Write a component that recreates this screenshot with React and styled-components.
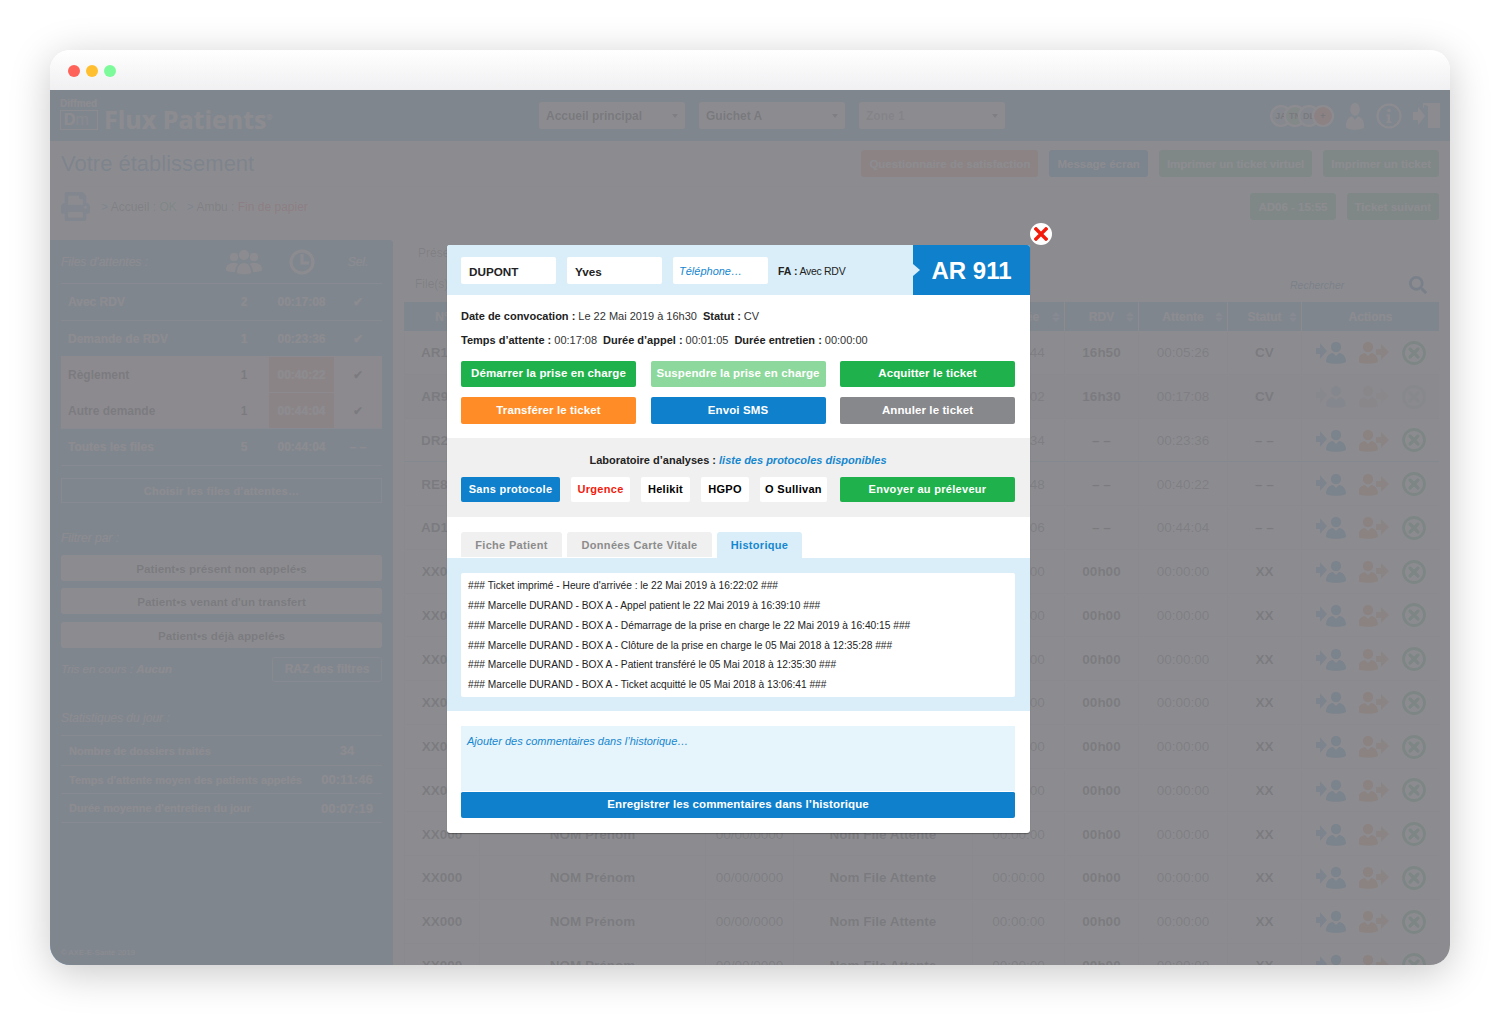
import React from 'react';
import styled, { createGlobalStyle } from 'styled-components';
import { FaPrint, FaSearch, FaSort } from 'react-icons/fa';

const GlobalStyle = createGlobalStyle`
  html, body {
    margin: 0;
    background: #fff;
    font-family: "Liberation Sans", Arial, sans-serif;
  }
  * { box-sizing: border-box; }
`;

const Page = styled.div`
  width: 1500px;
  height: 1015px;
  padding: 50px;
  overflow: hidden;
`;

const Frame = styled.div`
  height: 915px;
  border-radius: 20px;
  overflow: hidden;
  box-shadow: 0 8px 40px rgba(0, 0, 0, 0.22);
`;

const TitleBar = styled.div`
  height: 40px;
  display: flex;
  align-items: center;
  gap: 6px;
  padding: 2px 0 0 18px;
  background: linear-gradient(#fff, #f0f0f2);
`;

const Dot = styled.span`
  width: 12px;
  height: 12px;
  border-radius: 50%;
  background: ${p => p.$color};
`;

const Screen = styled.div`
  position: relative;
  height: 875px;
  overflow: hidden;
  background: #fff;
`;

const Overlay = styled.div`
  position: absolute;
  inset: 0;
  background: rgba(127, 128, 132, 0.9);
`;

/* --- application behind the dialog --- */

const AppHeader = styled.header`
  height: 51px;
  display: flex;
  align-items: center;
  padding: 0 10px;
  background: #86bdea;
  color: #fff;
`;

const Logo = styled.div`
  width: 44px;
  height: 36px;
  display: flex;
  flex-direction: column;
  font-weight: 700;
`;

const LogoName = styled.span`
  font-size: 10px;
  line-height: 11px;
  margin-bottom: 1px;
`;

const LogoBox = styled.span`
  width: 38px;
  height: 20px;
  padding-left: 3px;
  border: 1px solid #fff;
  font-size: 16px;
  line-height: 18px;
  u {
    text-decoration: none;
    font-weight: 400;
    opacity: 0.6;
  }
`;

const Product = styled.div`
  width: 435px;
  padding-top: 7px;
  font-family: "Open Sans", sans-serif;
  font-size: 25px;
  font-weight: 700;
  sup { font-size: 7px; }
`;

const Select = styled.div`
  width: 146px;
  height: 27px;
  margin-right: 14px;
  padding: 0 7px;
  display: flex;
  align-items: center;
  justify-content: space-between;
  border-radius: 3px;
  background: #fff;
  color: ${p => (p.$muted ? '#aaa' : '#444')};
  font-size: 12px;
  font-weight: 700;
  &::after {
    content: '';
    border: 3px solid transparent;
    border-top: 4px solid #777;
    margin-top: 3px;
  }
`;

const HeaderTools = styled.div`
  margin-left: auto;
  display: flex;
  align-items: center;
  gap: 11px;
`;

const Avatars = styled.div`
  display: flex;
`;

const Avatar = styled.span`
  width: 22px;
  height: 22px;
  margin-left: ${p => (p.$first ? '0' : '-8px')};
  border: 2px solid #fff;
  border-radius: 50%;
  display: flex;
  align-items: center;
  justify-content: center;
  background: ${p => p.$color};
  color: #444;
  font-size: 9px;
  font-weight: 700;
`;

const TitleRow = styled.div`
  height: 46px;
  margin: 0 11px;
  display: flex;
  align-items: center;
  justify-content: space-between;
  border-bottom: 1px solid #eee;
`;

const Heading = styled.h1`
  margin: 0;
  font-size: 22px;
  font-weight: 400;
  color: #70a8d8;
`;

const Actions = styled.div`
  display: flex;
  gap: 11px;
`;

const TopButton = styled.div`
  height: 27px;
  display: flex;
  align-items: center;
  padding: 0 8px;
  border-radius: 3px;
  background: ${p => p.$color};
  color: #fff;
  font-size: 11.5px;
  font-weight: 700;
`;

const StatusRow = styled.div`
  height: 53px;
  padding: 2px 11px 16px;
  display: flex;
  align-items: center;
  justify-content: space-between;
`;

const PrinterState = styled.div`
  display: flex;
  align-items: center;
  gap: 11px;
  font-size: 12px;
  color: #888;
  svg { color: #8cc4ee; }
  b { font-weight: 400; color: #7fc89a; }
  i { font-style: normal; color: #ff7070; }
  em { font-style: normal; color: #6cb4e8; }
`;

const Columns = styled.div`
  display: flex;
  height: 725px;
`;

const Sidebar = styled.aside`
  width: 343px;
  padding: 0 11px 8px;
  display: flex;
  flex-direction: column;
  border-radius: 0 3px 0 0;
  background: #86bdea;
  color: #fff;
`;

const QueueHead = styled.div`
  height: 43px;
  display: grid;
  grid-template-columns: 158px 50px 65px 48px;
  align-items: center;
  justify-items: center;
  font-size: 12px;
  font-style: italic;
  > :first-child { justify-self: start; }
`;

const QueueRow = styled.div`
  height: ${p => (p.$short ? '36px' : '37px')};
  padding-top: ${p => (p.$alert ? '1px' : '0')};
  display: grid;
  grid-template-columns: 158px 50px 65px 48px;
  align-items: center;
  justify-items: center;
  border-top: ${p => (p.$alert ? '0' : '1px solid #c9e5fb')};
  background: ${p => (p.$alert ? '#ffe8ee' : 'transparent')};
  color: ${p => (p.$alert ? '#555' : '#fff')};
  font-size: 12px;
  font-weight: 700;
`;

const QueueName = styled.span`
  justify-self: start;
  padding-left: 7px;
`;

const QueueTime = styled.span`
  align-self: stretch;
  justify-self: stretch;
  display: flex;
  align-items: center;
  justify-content: center;
  background: ${p => (p.$alert ? '#f4b0a2' : 'transparent')};
  color: #fff;
`;

const ChooseBox = styled.div`
  height: 25px;
  margin-top: 12px;
  border: 1px solid #c9e5fb;
  display: flex;
  align-items: center;
  justify-content: center;
  font-size: 11px;
  font-weight: 700;
  letter-spacing: 0.3px;
`;

const QueueEnd = styled.div`
  border-top: 1px solid #c9e5fb;
`;

const SideLabel = styled.div`
  margin: ${p => p.$margin};
  font-size: 12px;
  line-height: 14px;
  font-style: italic;
`;

const FilterButton = styled.div`
  height: 26px;
  margin-bottom: ${p => p.$gap || '7px'};
  display: flex;
  align-items: center;
  justify-content: center;
  border-radius: 3px;
  background: #fff;
  color: #555;
  font-size: 11.7px;
  font-weight: 700;
`;

const SortRow = styled.div`
  height: 26px;
  margin-top: 8px;
  display: flex;
  align-items: center;
  justify-content: space-between;
  font-size: 11.5px;
  font-style: italic;
`;

const ResetBox = styled.div`
  width: 110px;
  height: 25px;
  border: 1px solid #c9e5fb;
  border-radius: 3px;
  display: flex;
  align-items: center;
  justify-content: center;
  font-size: 12px;
  font-style: normal;
  font-weight: 700;
`;

const StatRow = styled.div`
  height: ${p => p.$h || 29}px;
  padding: 0 8px;
  display: flex;
  align-items: center;
  justify-content: space-between;
  border-top: 1px solid #c9e5fb;
  font-size: 11px;
  font-weight: 700;
  white-space: nowrap;
`;

const StatValue = styled.span`
  width: 54px;
  text-align: center;
  font-size: 13px;
  color: #fff;
`;

const StatEnd = styled.div`
  border-top: 1px solid #c9e5fb;
`;

const Copyright = styled.div`
  margin-top: auto;
  font-size: 7.5px;
  letter-spacing: 0.2px;
`;

const Main = styled.main`
  flex: 1;
  padding: 0 11px;
  overflow: hidden;
`;

const MainTop = styled.div`
  height: 62px;
  position: relative;
  display: flex;
  justify-content: space-between;
  padding: 6px 14px 0;
  color: #888;
  font-size: 12px;
`;

const FileLabel = styled.span`
  position: absolute;
  left: 11px;
  top: 37px;
`;

const Search = styled.div`
  width: 145px;
  height: 20px;
  margin: 29px -7px 0 0;
  padding: 0 5px 0 3px;
  display: flex;
  align-items: center;
  justify-content: space-between;
  background: #fafafa;
  color: #4a88bc;
  font-size: 10.5px;
  font-style: italic;
`;

const TableHead = styled.div`
  height: 29px;
  display: grid;
  grid-template-columns: 75px 226px 88px 179px 92px 74px 89px 74px 138px;
  background: #86bdea;
  color: #fff;
  font-size: 12px;
  font-weight: 700;
`;

const HeadCell = styled.div`
  position: relative;
  display: flex;
  align-items: center;
  justify-content: center;
  border-left: 1px solid #fff;
  &:first-child { border-left-color: #86bdea; }
  svg {
    position: absolute;
    right: 4px;
    width: 8px;
    color: #cde6fb;
  }
`;

const TableRow = styled.div`
  height: 43.75px;
  padding-top: 1px;
  display: grid;
  grid-template-columns: 75px 226px 88px 179px 92px 74px 89px 74px 138px;
  border-bottom: 1px solid ${p => (p.$mark ? '#a8d6f5' : '#e4e4e4')};
  background: ${p => (p.$dim ? '#ebe6ee' : 'transparent')};
  font-size: 13.5px;
`;

const Cell = styled.div`
  display: flex;
  align-items: center;
  justify-content: center;
  border-left: 1px solid #e4e4e4;
  font-weight: ${p => (p.$bold ? 700 : 400)};
  color: ${p => (p.$bold ? '#555' : '#777')};
`;

const ActionCell = styled(Cell)`
  gap: 13px;
  opacity: ${p => (p.$faded ? 0.25 : 0.8)};
`;

/* --- dialog --- */

const Modal = styled.section`
  position: absolute;
  left: 397px;
  top: 155px;
  width: 583px;
  height: 588px;
  border-radius: 3px;
  background: #fff;
  box-shadow: 0 1px 1px rgba(0, 0, 0, 0.35);
  color: #222;
`;

const CloseBadge = styled.div`
  position: absolute;
  right: -22px;
  top: -22px;
  width: 22px;
  height: 22px;
  border-radius: 50%;
  background: #fff;
  display: flex;
  align-items: center;
  justify-content: center;
`;

const ModalHead = styled.div`
  height: 50px;
  padding-left: 14px;
  display: flex;
  align-items: center;
  gap: 11px;
  border-radius: 3px 3px 0 0;
  background: #d9eef8;
`;

const Field = styled.div`
  width: 95px;
  height: 27px;
  padding: ${p => (p.$italic ? '2px 0 0 6px' : '2px 0 0 8px')};
  display: flex;
  align-items: center;
  border-radius: 2px;
  background: #fff;
  font-size: ${p => (p.$italic ? '11px' : '11.7px')};
  font-weight: ${p => (p.$italic ? 400 : 700)};
  font-style: ${p => (p.$italic ? 'italic' : 'normal')};
  color: ${p => (p.$italic ? '#1587cf' : '#222')};
`;

const QueueInfo = styled.div`
  margin-left: -1px;
  padding-top: 2px;
  font-size: 10.5px;
  letter-spacing: -0.3px;
  b { letter-spacing: 0; }
`;

const Tag = styled.div`
  position: relative;
  width: 117px;
  height: 50px;
  margin-left: auto;
  padding-top: 2px;
  display: flex;
  align-items: center;
  justify-content: center;
  border-radius: 0 3px 0 0;
  background: #0f80cb;
  color: #fff;
  font-size: 24px;
  font-weight: 700;
  &::before {
    content: '';
    position: absolute;
    left: 0;
    top: 19px;
    border: 6px solid transparent;
    border-left: 7px solid #d9eef8;
  }
`;

const Info = styled.div`
  padding: 9px 14px 0;
  font-size: 11px;
  line-height: 24px;
  color: #333;
  white-space: nowrap;
  b { margin-right: 3px; color: #222; }
  span { margin-right: 6px; }
`;

const ButtonGrid = styled.div`
  margin: 9px 15px 14px 14px;
  display: grid;
  grid-template-columns: repeat(3, 175px);
  grid-template-rows: 26px 27px;
  gap: 10px 14.5px;
`;

const DialogButton = styled.div`
  display: flex;
  align-items: center;
  justify-content: center;
  padding-bottom: 2px;
  border-radius: 2px;
  background: ${p => p.$color};
  color: #fff;
  font-size: 11.5px;
  font-weight: 700;
  letter-spacing: 0.1px;
`;

const Lab = styled.div`
  padding: 14px 15px 15px 14px;
  background: #f0f0f0;
`;

const LabTitle = styled.div`
  margin-bottom: 9px;
  text-align: center;
  font-size: 11px;
  line-height: 16px;
  font-weight: 700;
  em { color: #1587cf; }
`;

const LabRow = styled.div`
  height: 25px;
  display: grid;
  grid-template-columns: 99px 59px 49px 48px 67px 1fr;
  gap: 11px;
`;

const Protocol = styled.div`
  display: flex;
  align-items: center;
  justify-content: center;
  padding-bottom: 1px;
  margin-left: ${p => (p.$push ? '2px' : '0')};
  border-radius: 2px;
  background: ${p => p.$color || '#fff'};
  color: ${p => p.$text || '#000'};
  font-size: 11px;
  font-weight: 700;
  letter-spacing: 0.3px;
`;

const Tabs = styled.div`
  height: 41px;
  padding: 15px 14px 0;
  display: flex;
  gap: 5px;
`;

const Tab = styled.div`
  width: ${p => p.$width}px;
  height: ${p => (p.$active ? '26px' : '25px')};
  display: flex;
  align-items: center;
  justify-content: center;
  border-radius: 3px 3px 0 0;
  background: ${p => (p.$active ? '#d9eef8' : '#f0f0f0')};
  color: ${p => (p.$active ? '#1587cf' : '#8c8c8c')};
  font-size: 11px;
  font-weight: 700;
  letter-spacing: 0.3px;
`;

const HistoryPanel = styled.div`
  height: 153px;
  padding: 15px 15px 14px 14px;
  background: #d9eef8;
`;

const HistoryBox = styled.div`
  height: 124px;
  padding: 3px 7px 0;
  border-radius: 2px;
  background: #fff;
`;

const HistoryLine = styled.div`
  height: 19.85px;
  line-height: 20px;
  font-size: 10.2px;
  color: #222;
  white-space: nowrap;
`;

const CommentBox = styled.div`
  height: 65px;
  margin: 15px 15px 0 14px;
  padding: 8px 6px;
  background: #e6f4fc;
  color: #1587cf;
  font-size: 11px;
  line-height: 14px;
  font-style: italic;
`;

const SaveButton = styled(DialogButton)`
  margin: 0 15px 0 14px;
  height: 27px;
  border-top: 1px solid #fff;
`;

/* --- drawings --- */

const PersonShape = ({ x = 0, fill }) => (
  <g transform={`translate(${x} 0)`} fill={fill}>
    <circle cx="11" cy="6" r="5.2" />
    <path d="M1 21c0-6 3-8.500 7-9l3 3 3-3c4 .500 7 3 7 9-3 1.500-6 1.800-10 1.800S4 22.500 1 21z" />
  </g>
);

const Transfer = ({ color, reverse }) => (
  <svg width="30" height="23" viewBox="0 0 30 23">
    {reverse ? (
      <>
        <PersonShape x={-2} fill={color} />
        <path d="M17 8h5V3l8 8-8 8v-5h-5z" fill={color} opacity="0.85" />
      </>
    ) : (
      <>
        <path d="M0 7h4V2l7 8-7 8v-5H0z" fill={color} opacity="0.85" />
        <PersonShape x={9} fill={color} />
      </>
    )}
  </svg>
);

const CancelIcon = ({ size = 24 }) => (
  <svg width={size} height={size} viewBox="0 0 24 24">
    <circle cx="12" cy="12" r="10.500" fill="none" stroke="#46ad6e" strokeWidth="2.800" />
    <path d="M8 8l8 8M16 8l-8 8" stroke="#46ad6e" strokeWidth="3.400" strokeLinecap="round" />
  </svg>
);

const RowActions = ({ faded }) => (
  <ActionCell $faded={faded}>
    <Transfer color="#2a8acb" />
    <Transfer color="#ee8250" reverse />
    <CancelIcon />
  </ActionCell>
);

const UsersIcon = () => (
  <svg width="36" height="26" viewBox="0 0 36 26" fill="#fff">
    <circle cx="8" cy="8" r="4" />
    <circle cx="28" cy="8" r="4" />
    <circle cx="18" cy="6" r="5" />
    <path d="M0 21c0-5 3-7 8-7 2 0 3 .500 4 1-2 2-3 5-3 8-5 0-9-1-9-2zM36 21c0-5-3-7-8-7-2 0-3 .500-4 1 2 2 3 5 3 8 5 0 9-1 9-2zM11 24c0-6 3-10 7-10s7 4 7 10c-2 1.500-12 1.500-14 0z" />
  </svg>
);

const ClockIcon = () => (
  <svg width="26" height="26" viewBox="0 0 26 26" fill="none" stroke="#fff" strokeWidth="3">
    <circle cx="13" cy="13" r="11" />
    <path d="M13 5v9h7" />
  </svg>
);

const InfoIcon = () => (
  <svg width="26" height="26" viewBox="0 0 26 26" fill="none" stroke="#fff">
    <circle cx="13" cy="13" r="11.500" strokeWidth="2" />
    <circle cx="13" cy="7.500" r="1.800" fill="#fff" stroke="none" />
    <path d="M10.500 11.500h3.500v7h1.500v1.500h-5v-1.500h1.200v-5.500h-1.200z" fill="#fff" stroke="none" />
  </svg>
);

const ExitIcon = () => (
  <svg width="27" height="26" viewBox="0 0 27 26" fill="#fff">
    <path d="M0 9h5V4l7 9-7 9v-5H0z" />
    <path d="M11 0h16v25H15V3l-4-1v3h-1V0z" />
  </svg>
);

const CloseIcon = () => (
  <svg width="14" height="14" viewBox="0 0 14 14">
    <path d="M2 2l10 10M12 2L2 12" stroke="#f21b0c" strokeWidth="3.400" strokeLinecap="square" />
  </svg>
);

const PersonIcon = () => (
  <svg width="20" height="28" viewBox="0 0 22 23" preserveAspectRatio="none">
    <PersonShape fill="#fff" />
  </svg>
);

const headers = [
  ['N°', true], ['Nom Prénom', true], ['Date', true], ["File d'attente", true],
  ['Arrivée', true], ['RDV', true], ['Attente', true], ['Statut', true], ['Actions', false],
];

const rows = [
  { id: 'AR107', name: 'MARTIN Paul', date: '22/05/2019', file: 'Avec RDV', time: '16:34:44', rdv: '16h50', wait: '00:05:26', status: 'CV' },
  { id: 'AR911', name: 'DUPONT Yves', date: '22/05/2019', file: 'Avec RDV', time: '16:22:02', rdv: '16h30', wait: '00:17:08', status: 'CV', faded: true },
  { id: 'DR296', name: 'BERNARD Luc', date: '22/05/2019', file: 'Demande de RDV', time: '16:15:34', rdv: '– –', wait: '00:23:36', status: '– –', mark: true },
  { id: 'RE812', name: 'PETIT Anne', date: '22/05/2019', file: 'Règlement', time: '15:58:48', rdv: '– –', wait: '00:40:22', status: '– –' },
  { id: 'AD106', name: 'ROUX Marie', date: '22/05/2019', file: 'Autre demande', time: '15:55:06', rdv: '– –', wait: '00:44:04', status: '– –' },
  ...Array.from({ length: 10 }, () => ({
    id: 'XX000', name: 'NOM Prénom', date: '00/00/0000', file: 'Nom File Attente', time: '00:00:00', rdv: '00h00', wait: '00:00:00', status: 'XX',
  })),
];

const history = [
  "### Ticket imprimé - Heure d'arrivée : le 22 Mai 2019 à 16:22:02 ###",
  '### Marcelle DURAND - BOX A - Appel patient le 22 Mai 2019 à 16:39:10 ###',
  '### Marcelle DURAND - BOX A - Démarrage de la prise en charge le 22 Mai 2019 à 16:40:15 ###',
  '### Marcelle DURAND - BOX A - Clôture de la prise en charge le 05 Mai 2018 à 12:35:28 ###',
  '### Marcelle DURAND - BOX A - Patient transféré le 05 Mai 2018 à 12:35:30 ###',
  '### Marcelle DURAND - BOX A - Ticket acquitté le 05 Mai 2018 à 13:06:41 ###',
];

const App = () => (
  <Page>
    <GlobalStyle />
    <Frame>
      <TitleBar>
        <Dot $color="#ff6259" />
        <Dot $color="#ffbf2f" />
        <Dot $color="#7dfb9a" />
      </TitleBar>
      <Screen>
        <AppHeader>
          <Logo>
            <LogoName>Diffmed</LogoName>
            <LogoBox>D<u>m</u></LogoBox>
          </Logo>
          <Product>Flux Patients<sup>®</sup></Product>
          <Select>Accueil principal</Select>
          <Select>Guichet A</Select>
          <Select $muted>Zone 1</Select>
          <HeaderTools>
            <Avatars>
              <Avatar $first $color="#b6d6ee">JA</Avatar>
              <Avatar $color="#9fdcb4">TN</Avatar>
              <Avatar $color="#b6d6ee">DL</Avatar>
              <Avatar $color="#ff8a7a">+</Avatar>
            </Avatars>
            <PersonIcon />
            <InfoIcon />
            <ExitIcon />
          </HeaderTools>
        </AppHeader>
        <TitleRow>
          <Heading>Votre établissement</Heading>
          <Actions>
            <TopButton $color="#f5a283">Questionnaire de satisfaction</TopButton>
            <TopButton $color="#5aa8e4">Message écran</TopButton>
            <TopButton $color="#7bcf96">Imprimer un ticket virtuel</TopButton>
            <TopButton $color="#7bcf96">Imprimer un ticket</TopButton>
          </Actions>
        </TitleRow>
        <StatusRow>
          <PrinterState>
            <FaPrint size={29} />
            <span><em>&gt;</em> Accueil : <b>OK</b> &nbsp; <em>&gt;</em> Ambu : <i>Fin de papier</i></span>
          </PrinterState>
          <Actions>
            <TopButton $color="#7bcf96">AD06 - 15:55</TopButton>
            <TopButton $color="#7bcf96">Ticket suivant</TopButton>
          </Actions>
        </StatusRow>
        <Columns>
          <Sidebar>
            <QueueHead>
              <span>Files d'attentes :</span>
              <UsersIcon />
              <ClockIcon />
              <span>Sel.</span>
            </QueueHead>
            <QueueRow>
              <QueueName>Avec RDV</QueueName><span>2</span><QueueTime>00:17:08</QueueTime><span>✔</span>
            </QueueRow>
            <QueueRow $short>
              <QueueName>Demande de RDV</QueueName><span>1</span><QueueTime>00:23:36</QueueTime><span>✔</span>
            </QueueRow>
            <QueueRow $alert $short>
              <QueueName>Règlement</QueueName><span>1</span><QueueTime $alert>00:40:22</QueueTime><span>✔</span>
            </QueueRow>
            <QueueRow $alert $short>
              <QueueName>Autre demande</QueueName><span>1</span><QueueTime $alert>00:44:04</QueueTime><span>✔</span>
            </QueueRow>
            <QueueRow>
              <QueueName>Toutes les files</QueueName><span>5</span><QueueTime>00:44:04</QueueTime><span>– –</span>
            </QueueRow>
            <QueueEnd />
            <ChooseBox>Choisir les files d'attentes…</ChooseBox>
            <SideLabel $margin="28px 0 10px">Filtrer par :</SideLabel>
            <FilterButton>Patient•s présent non appelé•s</FilterButton>
            <FilterButton $gap="8px">Patient•s venant d'un transfert</FilterButton>
            <FilterButton $gap="0">Patient•s déjà appelé•s</FilterButton>
            <SortRow>
              <span>Tris en cours : <b>Aucun</b></span>
              <ResetBox>RAZ des filtres</ResetBox>
            </SortRow>
            <SideLabel $margin="29px 0 10px">Statistiques du jour :</SideLabel>
            <StatRow $h={30}><span>Nombre de dossiers traités</span><StatValue>34</StatValue></StatRow>
            <StatRow $h={28}><span>Temps d'attente moyen des patients appelés</span><StatValue>00:11:46</StatValue></StatRow>
            <StatRow><span>Durée moyenne d'entretien du jour</span><StatValue>00:07:19</StatValue></StatRow>
            <StatEnd />
            <Copyright>© AXE-E-Santé 2019</Copyright>
          </Sidebar>
          <Main>
            <MainTop>
              <span>Présents</span>
              <FileLabel>File(s)</FileLabel>
              <Search>Rechercher<FaSearch size={18} /></Search>
            </MainTop>
            <TableHead>
              {headers.map(([label, sort]) => (
                <HeadCell key={label}>{label}{sort && <FaSort />}</HeadCell>
              ))}
            </TableHead>
            {rows.map((r, i) => (
              <TableRow key={i} $dim={r.faded} $mark={r.mark}>
                <Cell $bold>{r.id}</Cell>
                <Cell $bold>{r.name}</Cell>
                <Cell>{r.date}</Cell>
                <Cell $bold>{r.file}</Cell>
                <Cell>{r.time}</Cell>
                <Cell $bold>{r.rdv}</Cell>
                <Cell>{r.wait}</Cell>
                <Cell $bold>{r.status}</Cell>
                <RowActions faded={r.faded} />
              </TableRow>
            ))}
          </Main>
        </Columns>
        <Overlay />
        <Modal>
          <CloseBadge><CloseIcon /></CloseBadge>
          <ModalHead>
            <Field>DUPONT</Field>
            <Field>Yves</Field>
            <Field $italic>Téléphone…</Field>
            <QueueInfo><b>FA :</b> Avec RDV</QueueInfo>
            <Tag>AR 911</Tag>
          </ModalHead>
          <Info>
            <div>
              <b>Date de convocation :</b><span>Le 22 Mai 2019 à 16h30</span>
              <b>Statut :</b>CV
            </div>
            <div>
              <b>Temps d’attente :</b><span>00:17:08</span>
              <b>Durée d’appel :</b><span>00:01:05</span>
              <b>Durée entretien :</b>00:00:00
            </div>
          </Info>
          <ButtonGrid>
            <DialogButton $color="#1fb14c">Démarrer la prise en charge</DialogButton>
            <DialogButton $color="#8dd89c">Suspendre la prise en charge</DialogButton>
            <DialogButton $color="#1fb14c">Acquitter le ticket</DialogButton>
            <DialogButton $color="#ff8c26">Transférer le ticket</DialogButton>
            <DialogButton $color="#0f80cb">Envoi SMS</DialogButton>
            <DialogButton $color="#87888c">Annuler le ticket</DialogButton>
          </ButtonGrid>
          <Lab>
            <LabTitle>Laboratoire d’analyses : <em>liste des protocoles disponibles</em></LabTitle>
            <LabRow>
              <Protocol $color="#0f80cb" $text="#fff">Sans protocole</Protocol>
              <Protocol $text="#f21b0c">Urgence</Protocol>
              <Protocol>Helikit</Protocol>
              <Protocol>HGPO</Protocol>
              <Protocol>O Sullivan</Protocol>
              <Protocol $push $color="#1fb14c" $text="#fff">Envoyer au préleveur</Protocol>
            </LabRow>
          </Lab>
          <Tabs>
            <Tab $width={101}>Fiche Patient</Tab>
            <Tab $width={145}>Données Carte Vitale</Tab>
            <Tab $width={85} $active>Historique</Tab>
          </Tabs>
          <HistoryPanel>
            <HistoryBox>
              {history.map(line => <HistoryLine key={line}>{line}</HistoryLine>)}
            </HistoryBox>
          </HistoryPanel>
          <CommentBox>Ajouter des commentaires dans l’historique…</CommentBox>
          <SaveButton $color="#0f80cb">Enregistrer les commentaires dans l’historique</SaveButton>
        </Modal>
      </Screen>
    </Frame>
  </Page>
);

export default App;
